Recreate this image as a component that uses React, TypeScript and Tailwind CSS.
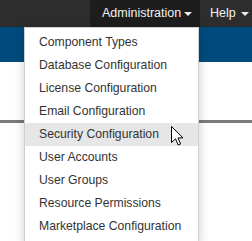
import { useState } from 'react'

const items = [
  'Component Types',
  'Database Configuration',
  'License Configuration',
  'Email Configuration',
  'Security Configuration',
  'User Accounts',
  'User Groups',
  'Resource Permissions',
  'Marketplace Configuration',
]

function Caret({ className }: { className: string }) {
  return (
    <span
      className={`inline-block h-0 w-0 border-x-[4px] border-t-[4px] border-x-transparent border-t-[#eeeeee] align-middle ${className}`}
    />
  )
}

export default function App() {
  const [hovered] = useState('Security Configuration')

  return (
    <div className="relative h-[241px] w-[252px] overflow-hidden bg-white font-['Liberation_Sans',Arial,sans-serif] text-[12.2px]">
      {/* top navbar */}
      <div className="flex h-[27px] justify-end bg-[#2d2d2d] text-[12.5px] text-[#f2f2f2]">
        <div className="relative flex w-[110px] items-center bg-[#1d1d1d] pl-[12px]">
          <span>Administration</span>
          <Caret className="ml-[3px]" />

          {/* dropdown */}
          <div className="absolute right-[1px] top-[27px] z-10 w-[175px] border border-[#cfcfcf] bg-white py-[3px] text-[12.2px] shadow-[0_4px_10px_rgba(0,0,0,0.2)]">
            {items.map((item) => (
              <div
                key={item}
                className={`h-[23px] whitespace-nowrap pl-[14px] leading-[23px] text-[#333333] ${
                  item === hovered ? 'bg-[#e6e6e6]' : ''
                }`}
              >
                {item}
              </div>
            ))}
          </div>
        </div>
        <div className="flex w-[52px] items-center pl-[10px]">
          <span>Help</span>
          <Caret className="ml-[5px]" />
        </div>
      </div>

      {/* blue header band */}
      <div className="h-[35px] bg-[#004a7e]" />

      {/* page content with divider */}
      <div className="h-[58px]" />
      <div className="h-[3px] bg-[#7a7a7a]" />

      {/* mouse pointer */}
      <svg
        className="absolute left-[171px] top-[126px] z-20"
        width="13"
        height="20"
        viewBox="0 0 13 20"
      >
        <path
          d="M0.5 0.5 L0.5 16.5 L4.5 12.8 L7.2 19 L9.6 18 L7 11.9 L12 11.9 Z"
          fill="#ffffff"
          stroke="#000000"
          strokeWidth="1"
          strokeLinejoin="miter"
        />
      </svg>
    </div>
  )
}
